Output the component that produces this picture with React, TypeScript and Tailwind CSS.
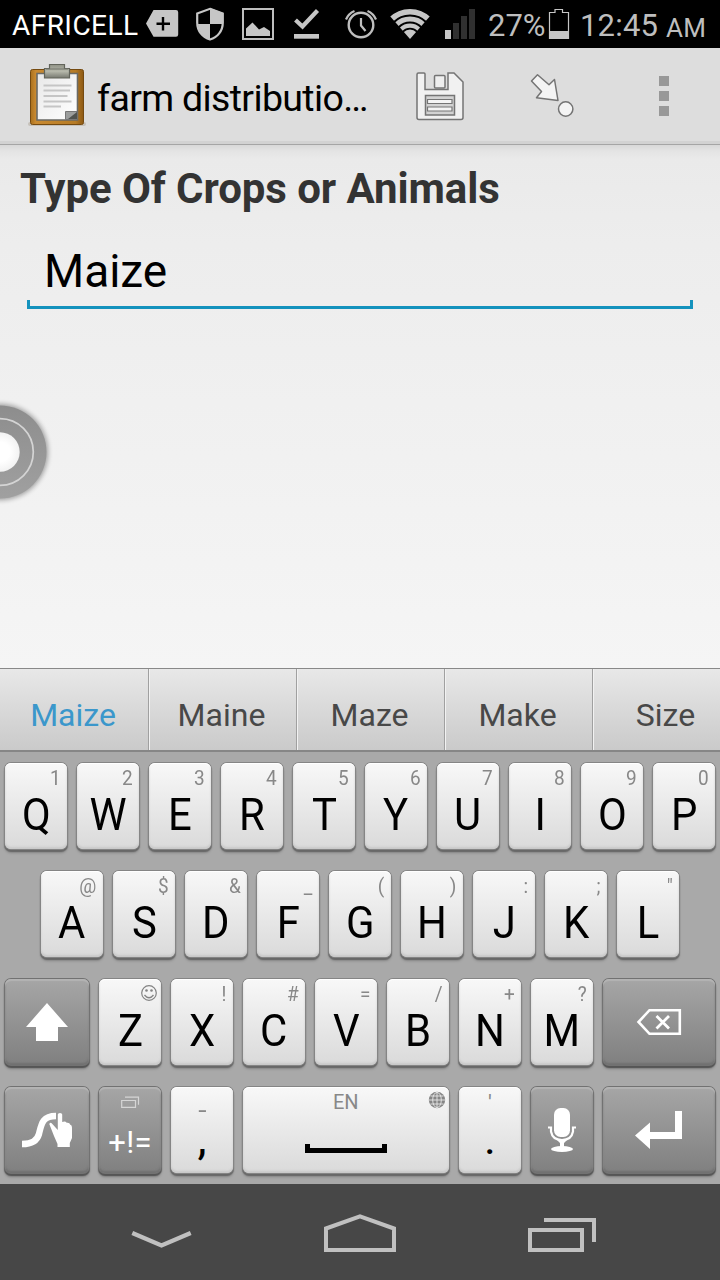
import type { ReactNode } from "react";

type ArtProps = { box: string; className?: string; children: ReactNode };

function Art({ box, className = "", children }: ArtProps) {
  const [, , w, h] = box.split(" ");
  return (
    <svg viewBox={box} width={w} height={h} fill="none" className={`block shrink-0 ${className}`}>
      {children}
    </svg>
  );
}

function StatusBar() {
  return (
    <header className="flex h-12 shrink-0 items-start bg-black text-[#bebebe]">
      <span className="ml-3 w-[134px] shrink-0 pt-[10px] text-[28px] leading-8 tracking-[0.45px] whitespace-nowrap text-white">AFRICELL</span>
      <Art box="146 0 34 48">
        <path d="M153.500 10H176a2.200 2.200 0 0 1 2.200 2.200V34.500a2.200 2.200 0 0 1-2.200 2.200H153.500L146 23.500z" fill="#c6c6c6" />
        <path d="M163 17v13.500M156.500 23.800h13.500" stroke="#000" strokeWidth="2.400" />
      </Art>
      <Art box="194 0 32 48" className="ml-[14px]">
        <path d="M210 8.800L222.800 13.500V22.500C222.800 31 217.500 37.500 210 39.500C202.500 37.500 197.200 31 197.200 22.500V13.500z" stroke="#c6c6c6" strokeWidth="2.200" />
        <path d="M210 8L223 13V24H210zM198 24H210V39.500C203 37 198 31 198 24z" fill="#c6c6c6" />
      </Art>
      <Art box="240 0 36 48" className="ml-[14px]">
        <path d="M243 9h30v30h-30z" stroke="#bebebe" strokeWidth="2" />
        <path d="M246 36V28.500L252.500 22.500L259 29.500L264 27L270 31V36z" fill="#c6c6c6" />
      </Art>
      <Art box="292 0 30 48" className="ml-4">
        <path d="M295.500 20l7 6.500L317.500 10.500" stroke="#c6c6c6" strokeWidth="4.200" />
        <path d="M294 34h25v4.700h-25z" fill="#c6c6c6" />
      </Art>
      <Art box="342 0 38 48" className="ml-5">
        <circle cx="361" cy="25" r="12.300" stroke="#bebebe" strokeWidth="2.400" />
        <path d="M361 18v7.500l4.500 5.500" stroke="#bebebe" strokeWidth="2.200" />
        <path d="M346 19.500Q348.500 13.500 354.500 11M376 19.500Q373.500 13.500 367.500 11" stroke="#bebebe" strokeWidth="2.200" />
      </Art>
      <Art box="388 0 44 48" className="ml-2">
        <clipPath id="fan"><path d="M410 39L389 15Q397 8.500 410 8.500T431 15z" /></clipPath>
        <g clipPath="url(#fan)" stroke="#c6c6c6">
          <circle cx="410" cy="38.500" r="26.800" strokeWidth="5.600" />
          <circle cx="410" cy="38.500" r="19.400" strokeWidth="5" />
          <circle cx="410" cy="38.500" r="12.800" strokeWidth="4.200" />
          <circle cx="410" cy="38.500" r="4.500" strokeWidth="9" />
        </g>
      </Art>
      <Art box="444 0 32 48" className="ml-3">
        <path d="M453 23h6v16h-6zM461 16h6v23h-6zM469 9h6v30h-6z" fill="#303030" />
        <path d="M445 30h6v9h-6z" fill="#c6c6c6" />
      </Art>
      <span className="ml-3 w-[60px] shrink-0 pt-[10px] text-[31px] leading-8 whitespace-nowrap">27%</span>
      <Art box="548 0 22 48">
        <path d="M549.500 12.500h5.500v-3h7.500v3h6v26h-19z" stroke="#c6c6c6" strokeWidth="1.200" />
        <path d="M549 31h20v8h-20z" fill="#c6c6c6" />
      </Art>
      <span className="ml-2.5 w-[86px] shrink-0 pt-[10px] text-[31px] leading-8 tracking-[0.2px] whitespace-nowrap">12:45</span>
      <span className="pt-[12px] text-[26px] leading-8 tracking-[0.2px] whitespace-nowrap">AM</span>
    </header>
  );
}

function ActionBar() {
  return (
    <div className="flex h-[97px] shrink-0 items-start border-b border-[#a5a5a5] bg-[#dddddd] shadow-[inset_0_-3px_0_#d2d2d2]">
      <Art box="26 48 64 96" className="ml-[26px]">
        <defs>
          <linearGradient id="board" x1="0" x2="1">
            <stop stopColor="#a9701d" /><stop offset="0.100" stopColor="#c98a31" /><stop offset="0.850" stopColor="#b67b25" /><stop offset="1" stopColor="#8c5813" />
          </linearGradient>
          <linearGradient id="clip" x1="0" x2="0" y1="0" y2="1">
            <stop stopColor="#8f9185" /><stop offset="0.500" stopColor="#b6b8ab" /><stop offset="1" stopColor="#777970" />
          </linearGradient>
          <linearGradient id="sheet" x1="0" x2="1" y1="0" y2="1">
            <stop stopColor="#e8e8e8" /><stop offset="1" stopColor="#ffffff" />
          </linearGradient>
        </defs>
        <rect x="28" y="122" width="58" height="4" rx="2" fill="#c6c1ba" />
        <rect x="30.500" y="69.500" width="53" height="55" rx="2" fill="url(#board)" stroke="#754a10" />
        <path d="M37 73.500h40.500v46.500H37z" fill="url(#sheet)" stroke="#6a6a66" strokeWidth="1.600" />
        <path d="M43.500 85.500h28M43.500 90.500h26.500M43.500 96h24M43.500 101.500h28M43.500 106.500h17.500" stroke="#c5c5c5" strokeWidth="2.200" />
        <path d="M65.500 119.500v-8h11.500v8z" fill="#9c9e9d" stroke="#777" />
        <path d="M68 119L77 112v7z" fill="#50534f" />
        <path d="M49.500 64.500h15v4h5v9.500h-25v-9.500h5z" fill="url(#clip)" stroke="#62645b" strokeWidth="1.200" />
        <path d="M46 69h22" stroke="#70736a" />
      </Art>
      <h1 className="ml-[7px] w-[310px] shrink-0 pt-[29px] text-[37.500px] leading-[42px] tracking-[-0.65px] whitespace-nowrap text-black">farm distributio…</h1>
      <Art box="412 48 56 96" className="ml-[5px]">
        <path d="M418.500 73h5.500q1 0 1 1v15.500h23V73h6l9 9v35.500q0 2-2 2H419q-2 0-2-2V74.500q0-1.500 1.500-1.500z" fill="#f1f1f1" stroke="#747474" strokeWidth="1.500" />
        <rect x="434.500" y="75.500" width="10.500" height="12.500" rx="1" fill="#eeeeee" stroke="#747474" strokeWidth="1.500" />
        <path d="M425.500 95.500h29v19.500h-29z" fill="#d2d2d2" stroke="#747474" strokeWidth="1.500" />
        <path d="M427.500 99.500h24.500v4h-24.500zM427.500 107h24.500v4h-24.500z" fill="#f4f4f4" stroke="#747474" strokeWidth="1.200" />
      </Art>
      <Art box="524 48 56 96" className="ml-14">
        <path d="M537.500 74.800L531.500 81L541.500 91.500L536.500 97.800L558 100.500L554.500 79.500L549 84.800z" fill="#f4f4f4" stroke="#747474" strokeWidth="1.500" strokeLinejoin="round" />
        <circle cx="565.700" cy="109" r="7.200" fill="#f4f4f4" stroke="#747474" strokeWidth="1.500" />
      </Art>
      <Art box="656 48 16 96" className="ml-[76px]">
        <path d="M659 76h10v10h-10zM659 91h10v10h-10zM659 106h10v10h-10z" fill="#989898" />
      </Art>
    </div>
  );
}

function TouchDot() {
  return (
    <div className="absolute top-[395px] left-0">
      <Art box="0 395 60 112">
        <defs>
          <filter id="soft"><feGaussianBlur stdDeviation="2.500" /></filter>
          <linearGradient id="ring" x1="0" x2="0" y1="0" y2="1"><stop stopColor="#8d8d8d" /><stop offset="1" stopColor="#a0a0a0" /></linearGradient>
          <radialGradient id="core"><stop offset="0.500" stopColor="#ffffff" /><stop offset="1" stopColor="#f2f2f2" /></radialGradient>
        </defs>
        <circle cx="0" cy="452" r="48" fill="#000" opacity="0.350" filter="url(#soft)" />
        <circle cx="0" cy="452" r="46.500" fill="url(#ring)" />
        <circle cx="0" cy="452" r="33.300" stroke="#d4d4d4" strokeWidth="1.700" />
        <circle cx="0" cy="452" r="19.700" fill="url(#core)" />
      </Art>
    </div>
  );
}

function Form() {
  return (
    <main className="flex h-[523px] shrink-0 flex-col bg-[linear-gradient(to_bottom,#d8d8d8_0px,#e4e4e4_6px,#eaeaea_14px,#ededed_100px,#f5f5f5_100%)]">
      <h2 className="pt-[19px] pl-[20px] text-[42px] leading-[50px] font-bold tracking-[-0.08px] whitespace-nowrap text-[#333333]">Type Of Crops or Animals</h2>
      <div className="mx-[27px] mt-[30px] flex flex-col">
        <div className="h-[50px] pl-[17px] text-[46px] leading-[54px] text-black">Maize</div>
        <div className="mt-[6px] h-[9px] border-x-3 border-b-3 border-[#1492bd]" />
      </div>
    </main>
  );
}

const words = ["Maize", "Maine", "Maze", "Make", "Size"];

function Suggestions() {
  return (
    <div className="flex h-[84px] shrink-0 overflow-hidden border-t border-b-2 border-t-[#888888] border-b-[#868686] bg-linear-to-b from-[#e8e8e8] to-[#cacaca]">
      {words.map((word, i) => (
        <div
          key={word}
          className={`flex w-[148px] shrink-0 justify-center pt-[24px] pr-0.5 text-[32px] leading-[44px] ${i ? "border-l border-[#a0a0a0] shadow-[inset_1px_0_0_#f2f2f2] text-[#484848]" : "text-[#3b97cb]"}`}
        >
          {word}
        </div>
      ))}
    </div>
  );
}

const lightKey = "bg-linear-to-b from-[#f8f8f8] to-[#dadada] shadow-[0_0_0_1px_#858585,0_2px_1px_1px_#686868,0_4px_3px_rgba(0,0,0,0.2),inset_0_1px_0_#ffffff,inset_0_-2px_2px_#c9c9c9]";
const darkKey = "bg-linear-to-b from-[#a6a6a6] to-[#808080] shadow-[0_0_0_1px_#727272,0_2px_1px_1px_#555555,0_4px_3px_rgba(0,0,0,0.25),inset_0_2px_1px_#b4b4b4,inset_0_-2px_2px_#707070]";

function Key({ width = "w-[62px]", dark = false, children }: { width?: string; dark?: boolean; children: ReactNode }) {
  return (
    <button type="button" className={`flex h-[86px] shrink-0 flex-col items-center rounded-[6px] ${width} ${dark ? darkKey : lightKey}`}>
      {children}
    </button>
  );
}

function Smiley() {
  return (
    <Art box="140 983 18 20">
      <circle cx="149" cy="992" r="7.300" stroke="#838383" strokeWidth="1.200" />
      <path d="M144.500 994q4.500 5.500 9 0" stroke="#838383" strokeWidth="1.300" />
      <circle cx="146.500" cy="989.500" r="1.300" fill="#838383" />
      <circle cx="151.500" cy="989.500" r="1.300" fill="#838383" />
    </Art>
  );
}

function Letter({ label, hint }: { label: string; hint: string }) {
  return (
    <Key>
      <span className={`mt-[5px] flex h-5 self-end text-[20px] leading-[21px] text-[#888888] ${hint === "smile" ? "pr-[3px]" : "origin-right scale-x-95 pr-[7px]"}`}>
        {hint === "smile" ? <Smiley /> : hint}
      </span>
      <span className="mt-1 scale-x-93 text-[45px] leading-[45px] text-black">{label}</span>
    </Key>
  );
}

const top = [["Q", "1"], ["W", "2"], ["E", "3"], ["R", "4"], ["T", "5"], ["Y", "6"], ["U", "7"], ["I", "8"], ["O", "9"], ["P", "0"]];
const home = [["A", "@"], ["S", "$"], ["D", "&"], ["F", "_"], ["G", "("], ["H", ")"], ["J", ":"], ["K", ";"], ["L", '"']];
const bottom = [["Z", "smile"], ["X", "!"], ["C", "#"], ["V", "="], ["B", "/"], ["N", "+"], ["M", "?"]];

function Keyboard() {
  return (
    <div className="flex h-[432px] shrink-0 flex-col gap-[22px] bg-[#a9a9a9] pt-[11px]">
      <div className="flex gap-2.5 pl-[5px]">
        {top.map(([l, h]) => <Letter key={l} label={l} hint={h} />)}
      </div>
      <div className="flex gap-2.5 pl-[41px]">
        {home.map(([l, h]) => <Letter key={l} label={l} hint={h} />)}
      </div>
      <div className="flex gap-2.5 pl-[5px]">
        <Key width="w-[84px]" dark>
          <Art box="5 979 84 86">
            <path d="M47 1003L68 1027H58V1041H36V1027H26z" fill="#fff" />
          </Art>
        </Key>
        {bottom.map(([l, h]) => <Letter key={l} label={l} hint={h} />)}
        <Key width="w-[112px]" dark>
          <Art box="603 979 112 86">
            <path d="M649.500 1010.200H679.800V1033.800H649.500L638.500 1022z" stroke="#fff" strokeWidth="2.600" />
            <path d="M656.500 1016l12.500 12.500M669 1016l-12.500 12.500" stroke="#fff" strokeWidth="2.800" />
          </Art>
        </Key>
      </div>
      <div className="flex gap-2.5 pl-[5px]">
        <Key width="w-[84px]" dark>
          <Art box="5 1087 84 86">
            <path d="M22 1144C32 1144 37 1141 39 1134C41.500 1124 42 1116 56 1116" stroke="#fff" strokeWidth="6.400" />
            <path d="M57.800 1114.500q0-1.500 2.200-1.500t2.200 1.500V1122q3-1.500 4.500.8q3-.5 3.500 2q2 .2 1.800 4.200V1138l-2.200 5v4H57.500v-3L54 1136l-4.700-12q1.300-2.500 3.500.5l5 5.500z" fill="#fff" />
          </Art>
        </Key>
        <Key dark>
          <Art box="120 1087 20 34">
            <path d="M121.700 1100.500h13.800v6.800h-13.800z" stroke="#d5d5d5" strokeWidth="1.200" />
            <path d="M125 1097.200h13.500v7.500" stroke="#d5d5d5" strokeWidth="1.200" />
          </Art>
          <span className="mt-[4px] text-[31px] leading-[36px] tracking-[0.3px] whitespace-nowrap text-white">+!=</span>
        </Key>
        <Key>
          <span className="mt-[17px] h-3 scale-x-125 text-[24px] leading-3 text-[#888888]">-</span>
          <span className="text-[46px] leading-[45px] text-black">,</span>
        </Key>
        <Key width="w-[206px]">
          <div className="flex h-[42px] w-full pl-[90px]">
            <span className="w-[95px] pt-[5px] text-left text-[20px] leading-[21px] text-[#888888]">EN</span>
            <Art box="428 1087 18 30">
              <circle cx="437" cy="1100" r="8.200" fill="#858585" />
              <path d="M437 1092v16M429 1100h16M430.500 1096h13M430.500 1104h13" stroke="#e8e8e8" strokeWidth="0.900" />
              <ellipse cx="437" cy="1100" rx="4.300" ry="7.600" stroke="#e8e8e8" strokeWidth="0.900" />
            </Art>
          </div>
          <div className="mt-[15px] h-[9px] w-[82px] border-x-5 border-b-5 border-black" />
        </Key>
        <Key>
          <span className="mt-[5px] h-5 text-[22px] leading-[22px] text-[#888888]">'</span>
          <span className="mt-1 text-[45px] leading-[45px] text-black">.</span>
        </Key>
        <Key dark>
          <Art box="531 1087 62 86">
            <rect x="554" y="1108" width="16" height="29" rx="6.500" fill="#fff" />
            <path d="M548 1127.500h3v4q1.500 8.500 11 8.500t11-8.500v-4h3" stroke="#fff" strokeWidth="2.200" />
            <path d="M557 1140h10l-3 3v4h-4v-4z" fill="#fff" />
            <ellipse cx="562" cy="1149" rx="11" ry="3" fill="#fff" />
          </Art>
        </Key>
        <Key width="w-[112px]" dark>
          <Art box="603 1087 112 86">
            <path d="M675 1111H682V1139H650V1149L635 1135.500L650 1122.500V1132H675z" fill="#fff" />
          </Art>
        </Key>
      </div>
    </div>
  );
}

function NavBar() {
  return (
    <nav className="flex h-24 shrink-0 bg-[#474747]">
      <Art box="130 1184 62 96" className="ml-[130px]">
        <path d="M132.300 1233L161.500 1245.500L190.700 1233" stroke="#c0c0c0" strokeWidth="4.300" />
      </Art>
      <Art box="322 1184 76 96" className="ml-[130px]">
        <path d="M326 1228.500L360 1216.300L394 1228.500V1250H326z" stroke="#c0c0c0" strokeWidth="4" />
      </Art>
      <Art box="526 1184 72 96" className="ml-32">
        <path d="M530 1230h52v20h-52z" stroke="#c0c0c0" strokeWidth="4" />
        <path d="M544 1220h50v22" stroke="#c0c0c0" strokeWidth="4" />
      </Art>
    </nav>
  );
}

export default function App() {
  return (
    <div className="relative flex h-[1280px] w-[720px] flex-col overflow-hidden font-['Roboto',sans-serif]">
      <StatusBar />
      <ActionBar />
      <Form />
      <Suggestions />
      <Keyboard />
      <NavBar />
      <TouchDot />
    </div>
  );
}
